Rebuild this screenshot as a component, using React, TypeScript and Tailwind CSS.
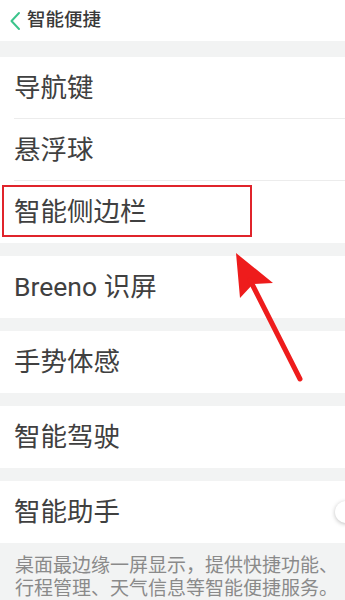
import React from "react";

const FONT = { fontFamily: "Roboto, 'Noto Sans CJK SC', sans-serif" };

function Row({ label, divider, children }: { label: string; divider?: boolean; children?: React.ReactNode }) {
  return (
    <div className="relative flex h-[62px] items-center bg-white pl-[14px]">
      <span className="text-[26.5px] leading-none text-[#404040]">{label}</span>
      {children}
      {divider ? <div className="absolute bottom-0 left-[14px] right-0 h-px bg-[#ececec]" /> : null}
    </div>
  );
}

function Gap({ h }: { h: string }) {
  return <div className={`${h} bg-[#f2f3f3]`} />;
}

export default function App() {
  return (
    <div className="relative h-[600px] w-[345px] overflow-hidden bg-white" style={FONT}>
      <div className="flex h-[41px] items-center gap-[6px] pl-[9px]">
        <svg width="12" height="20" viewBox="0 0 12 20" fill="none">
          <path d="M10 2 L2.5 10 L10 18" stroke="#3cc48c" strokeWidth="2" strokeLinecap="round" strokeLinejoin="round" />
        </svg>
        <span className="text-[18.5px] font-medium text-[#3a3a3a]">智能便捷</span>
      </div>
      <Gap h="h-[16px]" />
      <Row label="导航键" divider />
      <Row label="悬浮球" divider />
      <Row label="智能侧边栏" />
      <Gap h="h-[13px]" />
      <Row label="Breeno 识屏" />
      <Gap h="h-[13px]" />
      <Row label="手势体感" />
      <Gap h="h-[13px]" />
      <Row label="智能驾驶" />
      <Gap h="h-[13px]" />
      <Row label="智能助手">
        <div className="absolute right-[-12px] top-[20px] h-[22px] w-[22px] rounded-full bg-white shadow-[0_1px_4px_rgba(0,0,0,0.25)]" />
      </Row>
      <div className="bg-[#f2f3f3] pl-[15px] pt-[11px] text-[19px] leading-[23px] text-[#8a8a8a] whitespace-nowrap">
        <p>桌面最边缘一屏显示，提供快捷功能、</p>
        <p>行程管理、天气信息等智能便捷服务。</p>
      </div>

      <div className="pointer-events-none absolute left-[2px] top-[185px] h-[52px] w-[250px] border-2 border-[#e0242b]" />
      <svg className="pointer-events-none absolute left-0 top-0" width="345" height="600" viewBox="0 0 345 600">
        <path d="M236 253 L273 283 L253 284 L240 298 Z" fill="#ee1c1c" />
        <line x1="250" y1="280" x2="300" y2="379" stroke="#ee1c1c" strokeWidth="5" strokeLinecap="round" />
      </svg>
    </div>
  );
}
